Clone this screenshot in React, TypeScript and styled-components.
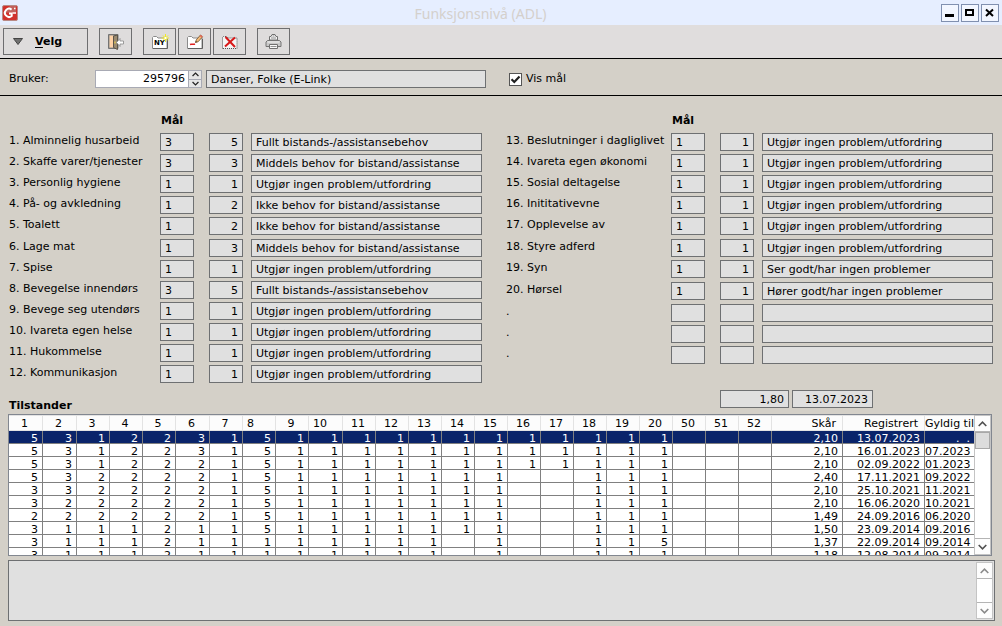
import React from "react";
import styled, { createGlobalStyle, css } from "styled-components";

const GlobalStyle = createGlobalStyle`
  *, *::before, *::after { box-sizing: border-box; }
  body {
    margin: 0;
    background: #d4d0c8;
    color: #000;
    font: 11px/16px Verdana, "DejaVu Sans", sans-serif;
  }
  button, input, textarea, table { font: inherit; color: inherit; }
  button { padding: 0; }
`;

/* ---------- window frame ---------- */

const TitleBar = styled.header`
  display: grid;
  grid-template-columns: 1fr auto 1fr;
  align-items: center;
  height: 25px;
  padding: 0 3px 0 2px;
  background: #e6eeff;
`;

const Title = styled.h1`
  margin: 0;
  padding: 3px 40px 0 0;
  font: 14px/20px Tahoma, "Noto Sans", sans-serif;
  color: #d4d0cc;
`;

const WindowButtons = styled.div`
  display: flex;
  justify-content: flex-end;
  gap: 2px;
`;

const WindowButton = styled.button`
  display: grid;
  place-items: center;
  width: 18px;
  height: 18px;
  border: 1px solid #8090b0;
  background: #f2f6ff;
`;

const Toolbar = styled.div`
  display: flex;
  align-items: flex-start;
  gap: 11px;
  height: 34px;
  padding: 3px 3px 0;
  background: #e0dddd;
  border-bottom: 1px solid #000;
`;

const ToolGroup = styled.div`
  display: flex;
  gap: 2px;
`;

const toolFace = css`
  height: 27px;
  border: 1px solid #6e6e70;
  background: #dedcdc;
`;

const MenuButton = styled.button`
  ${toolFace}
  display: flex;
  align-items: center;
  gap: 12px;
  width: 85px;
  padding-left: 9px;
  font-weight: bold;

  u { text-underline-offset: 2px; }
`;

const ToolButton = styled.button`
  ${toolFace}
  display: grid;
  place-items: center;
  width: 33px;
`;

/* ---------- fields ---------- */

const Field = styled.input<{ $right?: boolean; $width?: string }>`
  width: ${(p) => p.$width ?? "100%"};
  min-width: 0;
  height: 18px;
  padding: 0 4px;
  border: 1px solid #6e7072;
  border-radius: 0;
  background: #e0e0e0;
  text-align: ${(p) => (p.$right ? "right" : "left")};
  outline: none;
`;

const UserRow = styled.div`
  display: flex;
  align-items: center;
  height: 37px;
  padding: 4px 9px 0;
  border-bottom: 1px solid #000;
`;

const UserLabel = styled.label`
  width: 86px;
`;

const Spinner = styled.div`
  display: flex;
  width: 107px;
  height: 18px;
  margin-right: 4px;
  border: 1px solid #a8aab4;
  background: #a8aab4;
`;

const SpinnerInput = styled.input`
  flex: 1;
  min-width: 0;
  padding: 0 3px;
  border: 0;
  background: #fff;
  text-align: right;
  outline: none;
`;

const SpinnerButtons = styled.div`
  display: grid;
  grid-template-rows: 1fr 1fr;
  gap: 1px;
  width: 13px;
  padding-left: 1px;
`;

const SpinnerButton = styled.button`
  display: grid;
  place-items: center;
  border: 0;
  background: #e6e6e6;
`;

const CheckLabel = styled.label`
  display: flex;
  align-items: center;
  gap: 4px;
  margin-left: 23px;
`;

const CheckBox = styled.input`
  appearance: none;
  width: 13px;
  height: 13px;
  margin: 0;
  border: 1px solid #555;
  background: #fff;

  &:checked {
    background: #fff
      url("data:image/svg+xml,%3Csvg xmlns='http://www.w3.org/2000/svg' viewBox='0 0 11 11'%3E%3Cpath d='M1.5 5.2 4.3 8 9.5 2.5' fill='none' stroke='%23202020' stroke-width='2.2'/%3E%3C/svg%3E");
  }
`;

/* ---------- scoring form ---------- */

const ScoreForm = styled.div`
  display: flex;
  gap: 24px;
  padding: 17px 9px 0;
`;

const ScoreColumn = styled.section<{ $basis: number }>`
  flex: 1 1 ${(p) => p.$basis}px;
  min-width: 0;
  display: flex;
  flex-direction: column;
  gap: 4px;
`;

const GoalHeading = styled.h2<{ $indent: number }>`
  margin: 0;
  padding-left: ${(p) => p.$indent + 1}px;
  font: inherit;
  font-weight: bold;
`;

const ScoreGroup = styled.div`
  display: flex;
  flex-direction: column;
  gap: 3px;
`;

const ScoreRow = styled.div<{ $label: number }>`
  display: grid;
  grid-template-columns: ${(p) => p.$label}px 34px 34px minmax(0, 1fr);
  height: 18px;
`;

const ScoreLabel = styled.label`
  line-height: 15px;
  white-space: nowrap;
`;

const Current = styled(Field)`
  margin-left: 15px;
`;

const Description = styled(Field)`
  width: auto;
  margin-left: 23px;
`;

const Summary = styled.div`
  display: flex;
  align-items: flex-start;
  gap: 3px;
  padding: 7px 129px 0 9px;
`;

const SectionHeading = styled.h2`
  flex: 1;
  margin: 0;
  padding-top: 8px;
  font: inherit;
  font-weight: bold;
`;

/* ---------- history table ---------- */

const TableFrame = styled.div`
  display: flex;
  height: 142px;
  margin: 0 10px 0 8px;
  border: 1px solid #828790;
  background: #fff;
`;

const TableView = styled.div`
  flex: 1;
  min-width: 0;
  overflow: hidden;
`;

const HistoryTable = styled.table`
  width: 100%;
  table-layout: fixed;
  border-collapse: separate;
  border-spacing: 0;
`;

const headPadding: Record<string, string> = {
  right: "1px 6px 0 0",
  left: "1px 0 0 4px",
  center: "1px 2px 0 0",
};

const HeadCell = styled.th<{ $align: string; $last?: boolean }>`
  height: 16px;
  padding: ${(p) => (p.$last ? "1px 0 0" : headPadding[p.$align])};
  border: solid #e3e3e3;
  border-width: 1px ${(p) => (p.$last ? 0 : 1)}px 1px 0;
  background: #fcfcfc;
  font-weight: normal;
  line-height: 13px;
  text-align: ${(p) => p.$align};
  white-space: nowrap;
`;

const BodyRow = styled.tr<{ $selected?: boolean }>`
  background: ${(p) => (p.$selected ? "#0a246a" : "#fff")};
  color: ${(p) => (p.$selected ? "#fff" : "#000")};
`;

const Cell = styled.td`
  height: 13px;
  padding: 0 4px 0 0;
  border: solid #808080;
  border-width: 0 1px 1px 0;
  text-align: right;
  white-space: pre;

  &:last-child { border-right: 0; }
`;

const CellText = styled.div`
  height: 12px;
  line-height: 15px;
`;

/* ---------- scroll bars and notes ---------- */

const ScrollTrack = styled.div`
  display: flex;
  flex-direction: column;
  width: 17px;
  border: 1px solid #c4c4c4;
  background: #fff;
`;

const ScrollButton = styled.button<{ $down?: boolean }>`
  display: grid;
  place-items: center;
  height: 16px;
  border: 0 solid #b4b4b4;
  border-width: ${(p) => (p.$down ? "1px 0 0" : "0 0 1px")};
  background: #fdfdfd;
  ${(p) => p.$down && "margin-top: auto;"}
`;

const ScrollThumb = styled.div`
  height: 17px;
  background: #dcdcdc;
  border: 1px solid #a8a8a8;
`;

const Notes = styled.div`
  display: flex;
  height: 61px;
  margin: 4px 7px 5px 8px;
  padding: 1px;
  border: 1px solid #6e7072;
  background: #e0e0e0;
`;

const NotesText = styled.textarea`
  flex: 1;
  border: 0;
  background: transparent;
  resize: none;
  outline: none;
`;

/* ---------- icons ---------- */

const Logo = () => (
  <svg width="16" height="16" viewBox="0 0 16 16" aria-hidden="true">
    <rect x="0.5" y="0.5" width="15" height="15" rx="1.5" fill="#d0312d" stroke="#b98a86" />
    <path d="M1 8 8 1h6v6z" fill="#b8807c" opacity="0.6" />
    <path d="M9.600 4.600A4.100 4.100 0 1 0 9.700 11V8.400H7" fill="none" stroke="#fff" strokeWidth="2" />
    <path d="M12 3.500h1.500M10.500 8h3.500" stroke="#fff" strokeWidth="1.600" />
  </svg>
);

const DoorIcon = () => (
  <svg width="16" height="16" viewBox="0 0 16 16" aria-hidden="true">
    <path d="M.5 14.500V.5h9.500v14z" fill="#909090" stroke="#747474" />
    <path d="M1.500 1.500h4v12h-4z" fill="#ffd2a6" />
    <path d="M5.500 2l4-1v14.500l-4-2z" fill="#9a8a70" stroke="#5c5448" />
    <path d="M6.500 7.500h1v2h-1z" fill="#ffe040" />
    <path d="M8.500 8.500 12 4.500V7h3.500v3H12v2.500z" fill="#fff" stroke="#888" strokeWidth=".8" />
  </svg>
);

const Folder = ({ dashed }: { dashed?: boolean }) => (
  <>
    <path
      d="M1.500 14.500v-11l1-1h3l1.500 1.500h9v10.500z"
      fill={dashed ? "#f4f4f4" : "#fff"}
      stroke={dashed ? "#505050" : "#8c8c8c"}
      strokeDasharray={dashed ? "1 1" : undefined}
    />
    {!dashed && <path d="M2 14.500h14.500V5" fill="none" stroke="#606060" />}
  </>
);

const NewIcon = () => (
  <svg width="18" height="16" viewBox="0 0 18 16" aria-hidden="true">
    <Folder />
    <text x="3" y="11" fontFamily="DejaVu Sans, sans-serif" fontSize="7" fontWeight="bold">NY</text>
    <path d="M14.500 0v8M10.500 4h7.500M12 1.500l5 5M17 1.500l-5 5" stroke="#f4ec20" />
    <path d="M13.500 3h2v2h-2z" fill="#fff" />
  </svg>
);

const EditIcon = () => (
  <svg width="18" height="16" viewBox="0 0 18 16" aria-hidden="true">
    <Folder />
    <path d="M4 10.500c2-1 3 .5 5-.5" fill="none" stroke="#e02020" strokeWidth="1.500" />
    <path d="M9.500 8.500l.8-2.700L14.500 1l2 1.800-4.300 4.900z" fill="#f4bc78" stroke="#7c5a38" strokeWidth=".9" />
    <path d="M13.700 2l2 1.800 1-1.200-2-1.800z" fill="#e06858" />
    <path d="M9.500 8.500l.4-1.400 1 .9z" fill="#302010" />
  </svg>
);

const DeleteIcon = () => (
  <svg width="18" height="16" viewBox="0 0 18 16" aria-hidden="true">
    <Folder dashed />
    <path d="M4.500 3l9.500 10M14 3.500l-10 9" stroke="#d81818" strokeWidth="2" />
  </svg>
);

const PrintIcon = () => (
  <svg width="17" height="17" viewBox="0 0 17 17" aria-hidden="true">
    <path d="M4.500 7V3.500h1.500l1-2h3l1 2h1.500V7z" fill="#f4f4f4" stroke="#707070" />
    <path d="M6 5h5M7.500 3h2" stroke="#909090" />
    <path d="M2.500 7.500h12l1.500 1.500v4.500h-15V9z" fill="#c8c8c8" stroke="#747474" />
    <path d="M2.500 9h12" stroke="#f4f4f4" />
    <path d="M4.500 11.500h8v4h-8z" fill="#f8f8f8" stroke="#707070" />
    <path d="M5.500 13.500h6" stroke="#909090" />
  </svg>
);

const Chevron = ({ down, size = 9, color = "#505050" }: { down?: boolean; size?: number; color?: string }) => (
  <svg width={size} height={size === 9 ? 6 : 5} viewBox="0 0 9 6" aria-hidden="true">
    <path d={down ? "M.7 1l3.800 3.800L8.300 1" : "M.7 5l3.800-3.800L8.300 5"} fill="none" stroke={color} strokeWidth="1.600" />
  </svg>
);

/* ---------- data ---------- */

type Score = [label: string, goal: string, value: string, text: string];

const NONE = "Utgjør ingen problem/utfordring";
const LIGHT = "Ikke behov for bistand/assistanse";
const MEDIUM = "Middels behov for bistand/assistanse";
const FULL = "Fullt bistands-/assistansebehov";

const leftGroups: Score[][] = [
  [
    ["1. Alminnelig husarbeid", "3", "5", FULL],
    ["2. Skaffe varer/tjenester", "3", "3", MEDIUM],
    ["3. Personlig hygiene", "1", "1", NONE],
    ["4. På- og avkledning", "1", "2", LIGHT],
    ["5. Toalett", "1", "2", LIGHT],
  ],
  [
    ["6. Lage mat", "1", "3", MEDIUM],
    ["7. Spise", "1", "1", NONE],
    ["8. Bevegelse innendørs", "3", "5", FULL],
    ["9. Bevege seg utendørs", "1", "1", NONE],
    ["10. Ivareta egen helse", "1", "1", NONE],
    ["11. Hukommelse", "1", "1", NONE],
    ["12. Kommunikasjon", "1", "1", NONE],
  ],
];

const rightGroups: Score[][] = [
  [
    ["13. Beslutninger i dagliglivet", "1", "1", NONE],
    ["14. Ivareta egen økonomi", "1", "1", NONE],
    ["15. Sosial deltagelse", "1", "1", NONE],
    ["16. Inititativevne", "1", "1", NONE],
    ["17. Opplevelse av", "1", "1", NONE],
  ],
  [
    ["18. Styre adferd", "1", "1", NONE],
    ["19. Syn", "1", "1", "Ser godt/har ingen problemer"],
  ],
  [["20. Hørsel", "1", "1", "Hører godt/har ingen problemer"]],
  [
    [".", "", "", ""],
    [".", "", "", ""],
    [".", "", "", ""],
  ],
];

const columns: { name: string; width?: number; align?: string }[] = [
  { name: "1", width: 34 },
  { name: "2", width: 34 },
  { name: "3", width: 33 },
  { name: "4", width: 33 },
  { name: "5", width: 33 },
  { name: "6", width: 34 },
  { name: "7", width: 33 },
  { name: "8", width: 33, align: "left" },
  { name: "9", width: 33 },
  { name: "10", width: 34, align: "left" },
  ...["11", "12", "13", "14", "15", "16", "17", "18", "19", "20", "50", "51", "52"].map((name) => ({ name, width: 33 })),
  { name: "Skår", align: "right" },
  { name: "Registrert", width: 82, align: "right" },
  { name: "Gyldig til", width: 49, align: "right" },
];

/* One character per numbered column; a blank stands for no score. */
const history: [scores: string, average: string, registered: string, validTo: string][] = [
  ["53122315111111111111", "2,10", "13.07.2023", ".  ."],
  ["53122315111111111111", "2,10", "16.01.2023", "07.2023"],
  ["53122215111111111111", "2,10", "02.09.2022", "01.2023"],
  ["532222151111111  111", "2,40", "17.11.2021", "09.2022"],
  ["332222151111111  111", "2,10", "25.10.2021", "11.2021"],
  ["322222151111111  111", "2,10", "16.06.2020", "10.2021"],
  ["222222151111111  111", "1,49", "24.09.2016", "06.2020"],
  ["311121151111111  111", "1,50", "23.09.2014", "09.2016"],
  ["3111211111111 1  115", "1,37", "22.09.2014", "09.2014"],
  ["3111211111111 1  111", "1,18", "12.08.2014", "09.2014"],
];

/* ---------- parts ---------- */

function Scores({ groups, label, basis }: { groups: Score[][]; label: number; basis: number }) {
  let n = 0;
  return (
    <ScoreColumn $basis={basis}>
      <GoalHeading $indent={label}>Mål</GoalHeading>
      {groups.map((rows, g) => (
        <ScoreGroup key={g}>
          {rows.map(([name, goal, value, text]) => {
            const id = `score-${label}-${n++}`;
            return (
              <ScoreRow key={id} $label={label}>
                <ScoreLabel htmlFor={id}>{name}</ScoreLabel>
                <Field id={id} readOnly value={goal} />
                <Current $right $width="34px" readOnly value={value} aria-label={`${name} nivå`} />
                <Description readOnly value={text} aria-label={`${name} beskrivelse`} />
              </ScoreRow>
            );
          })}
        </ScoreGroup>
      ))}
    </ScoreColumn>
  );
}

function ScrollBar({ thumb, color }: { thumb?: boolean; color?: string }) {
  return (
    <ScrollTrack>
      <ScrollButton type="button" aria-label="Rull opp"><Chevron color={color} /></ScrollButton>
      {thumb && <ScrollThumb />}
      <ScrollButton type="button" aria-label="Rull ned" $down><Chevron down color={color} /></ScrollButton>
    </ScrollTrack>
  );
}

export default function App() {
  const [showGoals, setShowGoals] = React.useState(true);

  return (
    <>
      <GlobalStyle />
      <TitleBar>
        <Logo />
        <Title>Funksjonsnivå (ADL)</Title>
        <WindowButtons>
          <WindowButton aria-label="Minimer">
            <svg width="10" height="10"><path d="M0 6h9v3H0z" /></svg>
          </WindowButton>
          <WindowButton aria-label="Maksimer">
            <svg width="10" height="10"><path d="M1 2h7v5H1z" fill="none" stroke="#000" strokeWidth="2" /></svg>
          </WindowButton>
          <WindowButton aria-label="Lukk">
            <svg width="10" height="10"><path d="M1 1.500l7 6.500M8 1.500l-7 6.500" stroke="#000" strokeWidth="2" /></svg>
          </WindowButton>
        </WindowButtons>
      </TitleBar>

      <Toolbar>
        <MenuButton>
          <svg width="10" height="7" viewBox="0 0 10 7" aria-hidden="true">
            <path d="M.5.5h9L5 6.500z" fill="#707070" stroke="#444" />
          </svg>
          <span><u>V</u>elg</span>
        </MenuButton>
        <ToolButton aria-label="Avslutt"><DoorIcon /></ToolButton>
        <ToolGroup>
          <ToolButton aria-label="Ny"><NewIcon /></ToolButton>
          <ToolButton aria-label="Endre"><EditIcon /></ToolButton>
          <ToolButton aria-label="Slett"><DeleteIcon /></ToolButton>
        </ToolGroup>
        <ToolButton aria-label="Skriv ut"><PrintIcon /></ToolButton>
      </Toolbar>

      <main>
        <UserRow>
          <UserLabel htmlFor="user">Bruker:</UserLabel>
          <Spinner>
            <SpinnerInput id="user" defaultValue="295796" />
            <SpinnerButtons>
              <SpinnerButton aria-label="Neste"><Chevron size={7} color="#222" /></SpinnerButton>
              <SpinnerButton aria-label="Forrige"><Chevron down size={7} color="#222" /></SpinnerButton>
            </SpinnerButtons>
          </Spinner>
          <Field $width="280px" readOnly value="Danser, Folke (E-Link)" aria-label="Navn" />
          <CheckLabel>
            <CheckBox type="checkbox" checked={showGoals} onChange={(e) => setShowGoals(e.target.checked)} />
            Vis mål
          </CheckLabel>
        </UserRow>

        <ScoreForm>
          <Scores groups={leftGroups} label={151} basis={473} />
          <Scores groups={rightGroups} label={165} basis={487} />
        </ScoreForm>

        <Summary>
          <SectionHeading>Tilstander</SectionHeading>
          <Field $right $width="69px" readOnly value="1,80" aria-label="Skår" />
          <Field $right $width="81px" readOnly value="13.07.2023" aria-label="Dato" />
        </Summary>

        <TableFrame>
          <TableView>
            <HistoryTable>
              <colgroup>
                {columns.map((c) => (
                  <col key={c.name} width={c.width} />
                ))}
              </colgroup>
              <thead>
                <tr>
                  {columns.map((c, i) => (
                    <HeadCell key={c.name} $align={c.align ?? "center"} $last={i === columns.length - 1}>
                      {c.name}
                    </HeadCell>
                  ))}
                </tr>
              </thead>
              <tbody>
                {history.map(([scores, average, registered, validTo], r) => (
                  <BodyRow key={registered} $selected={r === 0}>
                    {[...scores.split(""), "", "", "", average, registered, validTo].map((v, i) => (
                      <Cell key={i}><CellText>{v}</CellText></Cell>
                    ))}
                  </BodyRow>
                ))}
              </tbody>
            </HistoryTable>
          </TableView>
          <ScrollBar thumb />
        </TableFrame>

        <Notes>
          <NotesText readOnly aria-label="Merknad" />
          <ScrollBar color="#8a8a8a" />
        </Notes>
      </main>
    </>
  );
}
